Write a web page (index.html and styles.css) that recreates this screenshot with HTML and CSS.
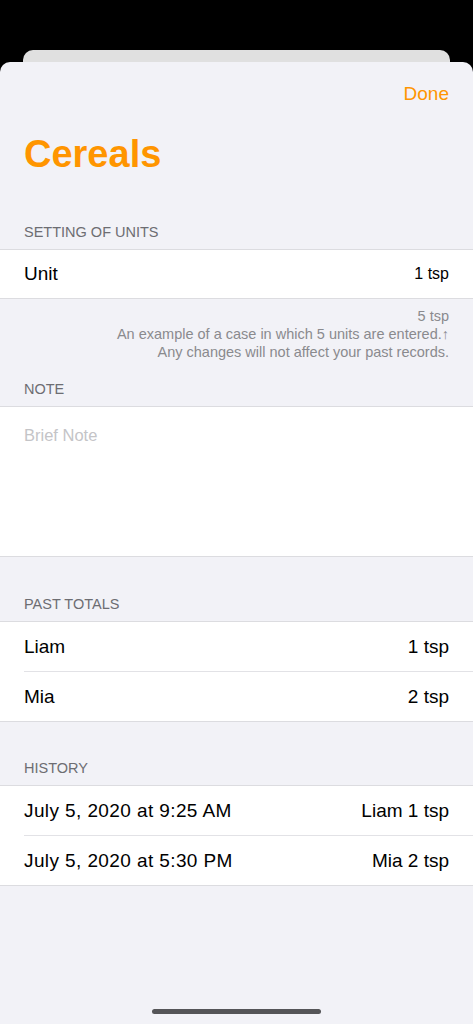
FILE: index.html
```html
<!doctype html>
<html lang="en">
<head>
	<meta charset="UTF-8">
	<title>Cereals</title>
	<link rel="stylesheet" href="styles.css">
</head>
<body>
	<div class="back_card"></div>
	<div class="sheet">
		<div class="nav">
			<span class="done">Done</span>
		</div>
		<h1 class="title">Cereals</h1>

		<div class="sec_head first">SETTING OF UNITS</div>
		<ul class="group">
			<li class="row unit"><span>Unit</span><span class="small">1 tsp</span></li>
		</ul>
		<div class="sec_foot">
			<p>5 tsp</p>
			<p>An example of a case in which 5 units are entered.↑</p>
			<p>Any changes will not affect your past records.</p>
		</div>

		<div class="sec_head note_head">NOTE</div>
		<div class="group note">
			<span class="placeholder">Brief Note</span>
		</div>

		<div class="sec_head totals_head">PAST TOTALS</div>
		<ul class="group">
			<li class="row"><span>Liam</span><span>1 tsp</span></li>
			<li class="row"><span>Mia</span><span>2 tsp</span></li>
		</ul>

		<div class="sec_head history_head">HISTORY</div>
		<ul class="group">
			<li class="row"><span class="date">July 5, 2020 at 9:25 AM</span><span>Liam 1 tsp</span></li>
			<li class="row"><span class="date">July 5, 2020 at 5:30 PM</span><span>Mia 2 tsp</span></li>
		</ul>

		<div class="home_bar"></div>
	</div>
</body>
</html>
```

FILE: styles.css
```css
*{
	margin: 0;
	padding: 0;
	list-style-type: none;
	box-sizing: border-box;
}
body{
	background: #000;
	font-family: "Liberation Sans", Arial, sans-serif;
	color: #000;
	width: 473px;
	height: 1024px;
	overflow: hidden;
}
.back_card{
	margin: 50px 23px 0;
	height: 12px;
	background: #e0e0e0;
	border-radius: 10px 10px 0 0;
}
.sheet{
	height: 962px;
	background: #f2f2f7;
	border-radius: 10px 10px 0 0;
	display: flex;
	flex-direction: column;
}
.nav{
	height: 64px;
	padding: 20px 24px 0;
	display: flex;
	justify-content: flex-end;
}
.done{
	color: #ff9500;
	font-size: 19px;
	line-height: 24px;
}
.title{
	margin-top: 6px;
	padding: 0 24px;
	font-size: 38px;
	line-height: 44px;
	font-weight: 700;
	color: #ff9500;
}
.sec_head{
	padding: 0 24px 8px;
	font-size: 14.5px;
	line-height: 18px;
	color: #6d6d72;
}
.first{
	margin-top: 47px;
}
.note_head{
	margin-top: 19px;
}
.totals_head{
	margin-top: 38px;
}
.history_head{
	margin-top: 37px;
}
.group{
	background: #fff;
	border-top: 1px solid #dcdce0;
	border-bottom: 1px solid #dcdce0;
}
.row{
	height: 49px;
	padding: 0 24px;
	display: flex;
	align-items: center;
	justify-content: space-between;
	font-size: 19px;
}
.row.unit{
	height: 48px;
}
.row + .row{
	margin-left: 24px;
	padding-left: 0;
	height: 50px;
	border-top: 1px solid #e2e2e6;
}
.row .small{
	font-size: 16px;
}
.row .date{
	letter-spacing: 0.4px;
}
.sec_foot{
	padding: 8px 24px 0;
	text-align: right;
	font-size: 14.5px;
	line-height: 18px;
	color: #8a8a8e;
}
.note{
	height: 151px;
	padding: 17px 24px 0;
}
.placeholder{
	font-size: 16.5px;
	line-height: 22px;
	color: #c4c4c7;
}
.home_bar{
	margin: auto auto 10px;
	width: 169px;
	height: 5px;
	border-radius: 3px;
	background: #555558;
}
```
